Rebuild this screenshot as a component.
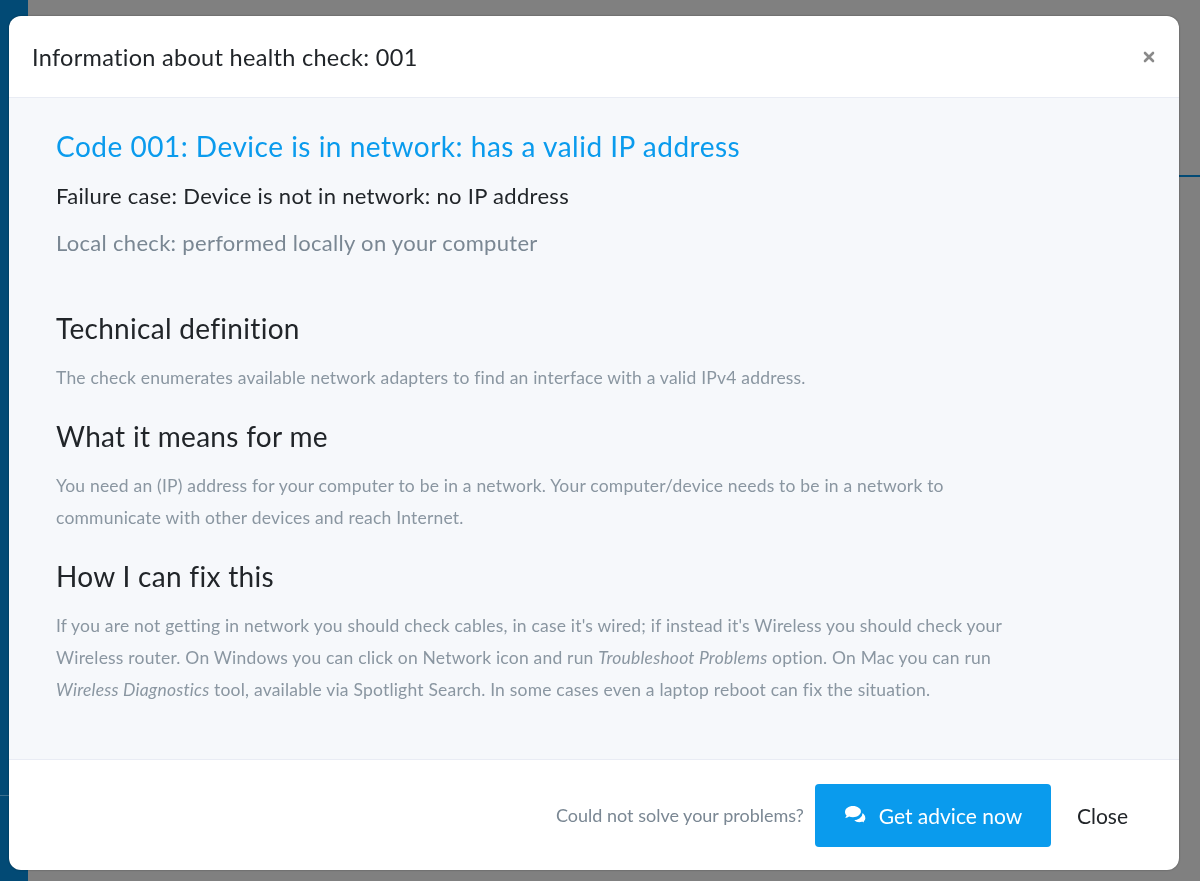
<script>
  const sections = [
    { title: "Technical definition" },
    { title: "What it means for me" },
    { title: "How I can fix this" }
  ];
</script>

<div class="page">
  <aside class="sidebar"><div class="side-line"></div></aside>
  <main class="content"><div class="top-line"></div></main>
</div>

<div class="backdrop">
  <div class="modal">
    <header class="modal-head">
      <h1>Information about health check: 001</h1>
      <button class="x" aria-label="Close">
        <svg width="12" height="12" viewBox="0 0 12 12"><path d="M2 2l8 8M10 2l-8 8" stroke="#8a8a8a" stroke-width="2.6" stroke-linecap="round"/></svg>
      </button>
    </header>

    <div class="modal-body">
      <h2>Code 001: Device is in network: has a valid IP address</h2>
      <p class="failure">Failure case: Device is not in network: no IP address</p>
      <p class="local">Local check: performed locally on your computer</p>

      <h3 class="first">{sections[0].title}</h3>
      <p class="text">The check enumerates available network adapters to find an interface with a valid IPv4 address.</p>

      <h3>{sections[1].title}</h3>
      <p class="text">You need an (IP) address for your computer to be in a network. Your computer/device needs to be in a network to<br>communicate with other devices and reach Internet.</p>

      <h3>{sections[2].title}</h3>
      <p class="text">If you are not getting in network you should check cables, in case it's wired; if instead it's Wireless you should check your<br>Wireless router. On Windows you can click on Network icon and run <em>Troubleshoot Problems</em> option. On Mac you can run<br><em>Wireless Diagnostics</em> tool, available via Spotlight Search. In some cases even a laptop reboot can fix the situation.</p>
    </div>

    <footer class="modal-foot">
      <span class="ask">Could not solve your problems?</span>
      <button class="advice">
        <svg width="24" height="20" viewBox="0 0 24 20"><path fill="#fff" d="M9 1C4.6 1 1 3.6 1 6.9c0 1.4.7 2.700 1.700 3.700-.4 1-1.200 1.800-1.600 2.200 1.500 0 3-.6 4-1.300 1.100.4 2.400.7 3.900.7 4.400 0 8-2.600 8-5.900C17 3.600 13.400 1 9 1z"/><path fill="#fff" stroke="#0a9bed" stroke-width="1.300" d="M17.800 7c.1.300.1.600.1.900 0 3.800-3.900 6.600-8.600 6.700 1 2 3.400 3.300 6 3.300 1 0 2-.2 2.900-.5.900.6 2.200 1.200 3.800 1.200-.4-.4-1.100-1.200-1.500-2.100 1-.9 1.500-2 1.500-3.300 0-2.600-1.700-4.900-4.200-6.200z"/></svg>
        Get advice now
      </button>
      <button class="close">Close</button>
    </footer>
  </div>
</div>

<style>
  :global(body) {
    margin: 0;
    font-family: Lato, "Open Sans", sans-serif;
  }
  .page {
    display: flex;
    height: 881px;
    overflow: hidden;
    background: #808080;
  }
  .sidebar {
    width: 28px;
    background: #024a75;
    padding-top: 795px;
    box-sizing: border-box;
  }
  .side-line {
    height: 1px;
    background: #3b6f8e;
  }
  .content {
    flex: 1;
    padding-top: 175px;
  }
  .top-line {
    height: 2px;
    background: #024a75;
  }
  .backdrop {
    position: fixed;
    inset: 0;
    padding: 16px 21px 11px 9px;
    box-sizing: border-box;
  }
  .modal {
    height: 854px;
    background: #fff;
    border-radius: 12px;
    display: flex;
    flex-direction: column;
    overflow: hidden;
    box-shadow: 0 0 2px rgba(0, 0, 0, 0.4);
  }
  .modal-head {
    height: 82px;
    flex: none;
    box-sizing: border-box;
    display: flex;
    align-items: center;
    justify-content: space-between;
    padding: 0 24px 0 23px;
    border-bottom: 1px solid #e9ecf4;
  }
  h1 {
    margin: 0;
    font-size: 23.500px;
    font-weight: 400;
    color: #212529;
    letter-spacing: 0.3px;
  }
  .x {
    border: 0;
    background: none;
    padding: 0;
    display: flex;
  }
  .modal-body {
    flex: 1;
    background: #f6f8fb;
    padding: 30px 47px 0;
    border-bottom: 1px solid #e9ecf4;
  }
  h2 {
    margin: 0;
    font-size: 28px;
    line-height: 36px;
    font-weight: 400;
    color: #0a9bed;
    letter-spacing: 0.5px;
  }
  .failure {
    margin: 17px 0 0;
    font-size: 22px;
    line-height: 30px;
    color: #212529;
    letter-spacing: 0.3px;
  }
  .local {
    margin: 17px 0 0;
    font-size: 22px;
    line-height: 30px;
    color: #7a8793;
    letter-spacing: 0.3px;
  }
  h3 {
    margin: 24px 0 0;
    font-size: 28px;
    line-height: 36px;
    font-weight: 400;
    color: #212529;
    letter-spacing: 0.3px;
  }
  h3.first {
    margin-top: 52px;
  }
  .text {
    margin: 16px 0 0;
    font-size: 17.500px;
    line-height: 32px;
    color: #8a96a1;
    letter-spacing: 0.2px;
  }
  .modal-foot {
    height: 110px;
    flex: none;
    box-sizing: border-box;
    display: flex;
    align-items: center;
    justify-content: flex-end;
    padding: 0 25px 0 0;
  }
  .ask {
    font-size: 18px;
    color: #7a8793;
    margin-right: 11px;
  }
  .advice {
    width: 236px;
    height: 63px;
    background: #0a9bed;
    border: 0;
    border-radius: 4px;
    color: #fff;
    font: inherit;
    font-size: 21px;
    display: flex;
    align-items: center;
    justify-content: center;
    gap: 11px;
  }
  .close {
    border: 0;
    background: none;
    font: inherit;
    font-size: 21px;
    color: #212529;
    padding: 0 26px;
  }
</style>
